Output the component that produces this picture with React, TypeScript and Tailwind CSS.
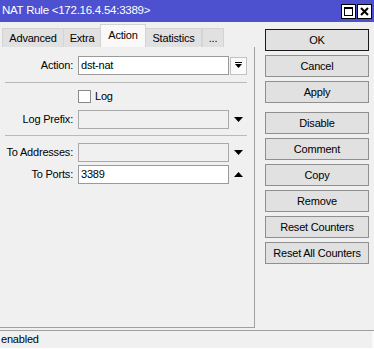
import React from "react";

function DownTri() {
  return (
    <svg width="9" height="5" viewBox="0 0 9 5">
      <polygon points="0,0 9,0 4.5,5" fill="#000" />
    </svg>
  );
}
function UpTri() {
  return (
    <svg width="9" height="5" viewBox="0 0 9 5">
      <polygon points="0,5 9,5 4.5,0" fill="#000" />
    </svg>
  );
}

function Row({
  label,
  value,
  disabled,
  icon,
  className,
}: {
  label: string;
  value?: string;
  disabled?: boolean;
  icon: React.ReactNode;
  className?: string;
}) {
  return (
    <div className={"flex items-center h-[19px] " + (className || "")}>
      <div className="w-[73px] text-right leading-none">{label}</div>
      <div
        className={
          "ml-[5px] w-[151px] h-[19px] border flex items-center pl-[2px] leading-none " +
          (disabled ? "bg-[#f0f0f0] border-[#a9a9a9]" : "bg-white border-[#9a9a9a]")
        }
      >
        {value}
      </div>
      <div className="ml-[1px] w-[17px] h-[19px] flex items-center justify-center">{icon}</div>
    </div>
  );
}

function Btn({ label, def, className }: { label: string; def?: boolean; className?: string }) {
  return (
    <div
      className={
        "h-[22px] w-[104px] bg-[#e1e1e1] border flex items-center justify-center leading-none " +
        (def ? "border-[#1a1a1a]" : "border-[#8f8f8f]") +
        " " +
        (className || "")
      }
    >
      {label}
    </div>
  );
}

export default function App() {
  const inactive =
    "h-[19px] bg-[#e1e1e1] border border-b-0 border-[#d4d4d4] flex items-center justify-center pt-[1px] leading-none";
  return (
    <div className="w-[374px] h-[349px] bg-[#f0f0f0] font-['Liberation_Sans',Arial,sans-serif] text-[11px] tracking-[-0.2px] text-black flex flex-col overflow-hidden">
      {/* title bar */}
      <div className="h-[22px] bg-[#4d50cf] flex items-center pl-[2px] pr-[2px]">
        <span className="text-white text-[11.5px] flex-1 leading-none tracking-[-0.25px]">
          NAT Rule &lt;172.16.4.54:3389&gt;
        </span>
        <div className="flex gap-[1px]">
          <div className="w-[15px] h-[15px] bg-white border border-black flex items-center justify-center">
            <svg width="9" height="9" viewBox="0 0 9 9">
              <rect x="0.5" y="0.5" width="8" height="8" fill="none" stroke="#000" strokeWidth="1" />
              <rect x="0" y="0" width="9" height="2" fill="#000" />
            </svg>
          </div>
          <div className="w-[15px] h-[15px] bg-white border border-black flex items-center justify-center">
            <svg width="9" height="9" viewBox="0 0 9 9">
              <path d="M1 1 L8 8 M8 1 L1 8" stroke="#000" strokeWidth="2" />
            </svg>
          </div>
        </div>
      </div>

      {/* main */}
      <div className="flex h-[308px]">
        <div className="w-[255px] flex flex-col pt-[2px]">
          {/* tabs */}
          <div className="h-[23px] flex items-end pl-[2px]">
            <div className={inactive + " w-[62px]"}>Advanced</div>
            <div className={inactive + " w-[38px] -ml-px"}>Extra</div>
            <div className="h-[23px] w-[46px] -ml-px bg-[#f9f9f9] border border-b-0 border-[#d4d4d4] flex items-center justify-center pb-[1px] leading-none relative z-10">
              Action
            </div>
            <div className={inactive + " w-[57px] -ml-px"}>Statistics</div>
            <div className={inactive + " w-[22px]"}>...</div>
          </div>
          {/* panel */}
          <div className="h-[281px] border-r border-b border-[#a0a0a0] flex flex-col pt-[9px]">
            <div className="flex items-center h-[19px]">
              <div className="w-[73px] text-right leading-none">Action:</div>
              <div className="ml-[5px] w-[151px] h-[19px] border bg-white border-[#9a9a9a] flex items-center pl-[2px] leading-none">
                dst-nat
              </div>
              <div className="ml-[1px] w-[17px] h-[18px] bg-[#fbfbfb] border border-[#c2c2c2] flex items-center justify-center">
                <svg width="7" height="7" viewBox="0 0 7 7">
                  <rect x="0" y="0" width="7" height="1" fill="#000" />
                  <polygon points="0,2 7,2 3.5,6" fill="#000" />
                </svg>
              </div>
            </div>
            <div className="ml-[5px] w-[242px] h-px bg-[#b9b9b9] mt-[7px]" />
            <div className="flex items-center h-[13px] mt-[7px] pl-[78px]">
              <div className="w-[13px] h-[13px] bg-white border border-[#8a8a8a]" />
              <span className="ml-[4px] leading-none">Log</span>
            </div>
            <Row className="mt-[7px]" label="Log Prefix:" disabled icon={<DownTri />} />
            <div className="ml-[5px] w-[242px] h-px bg-[#b9b9b9] mt-[6px]" />
            <Row className="mt-[7px]" label="To Addresses:" disabled icon={<DownTri />} />
            <Row className="mt-[3px]" label="To Ports:" value="3389" icon={<UpTri />} />
          </div>
        </div>

        {/* buttons */}
        <div className="ml-[10px] pt-[7px] flex flex-col gap-[4px]">
          <Btn label="OK" def />
          <Btn label="Cancel" />
          <Btn label="Apply" />
          <Btn label="Disable" className="mt-[5px]" />
          <Btn label="Comment" />
          <Btn label="Copy" />
          <Btn label="Remove" />
          <Btn label="Reset Counters" />
          <Btn label="Reset All Counters" />
        </div>
      </div>

      {/* status bar */}
      <div className="h-px bg-[#a0a0a0]" />
      <div className="h-[17px] flex">
        <div className="w-[372px] bg-[#f0f0f0] flex items-center pl-[1px] leading-none">enabled</div>
        <div className="flex-1 bg-[#fafafa]" />
      </div>
      <div className="h-px bg-white" />
    </div>
  );
}
